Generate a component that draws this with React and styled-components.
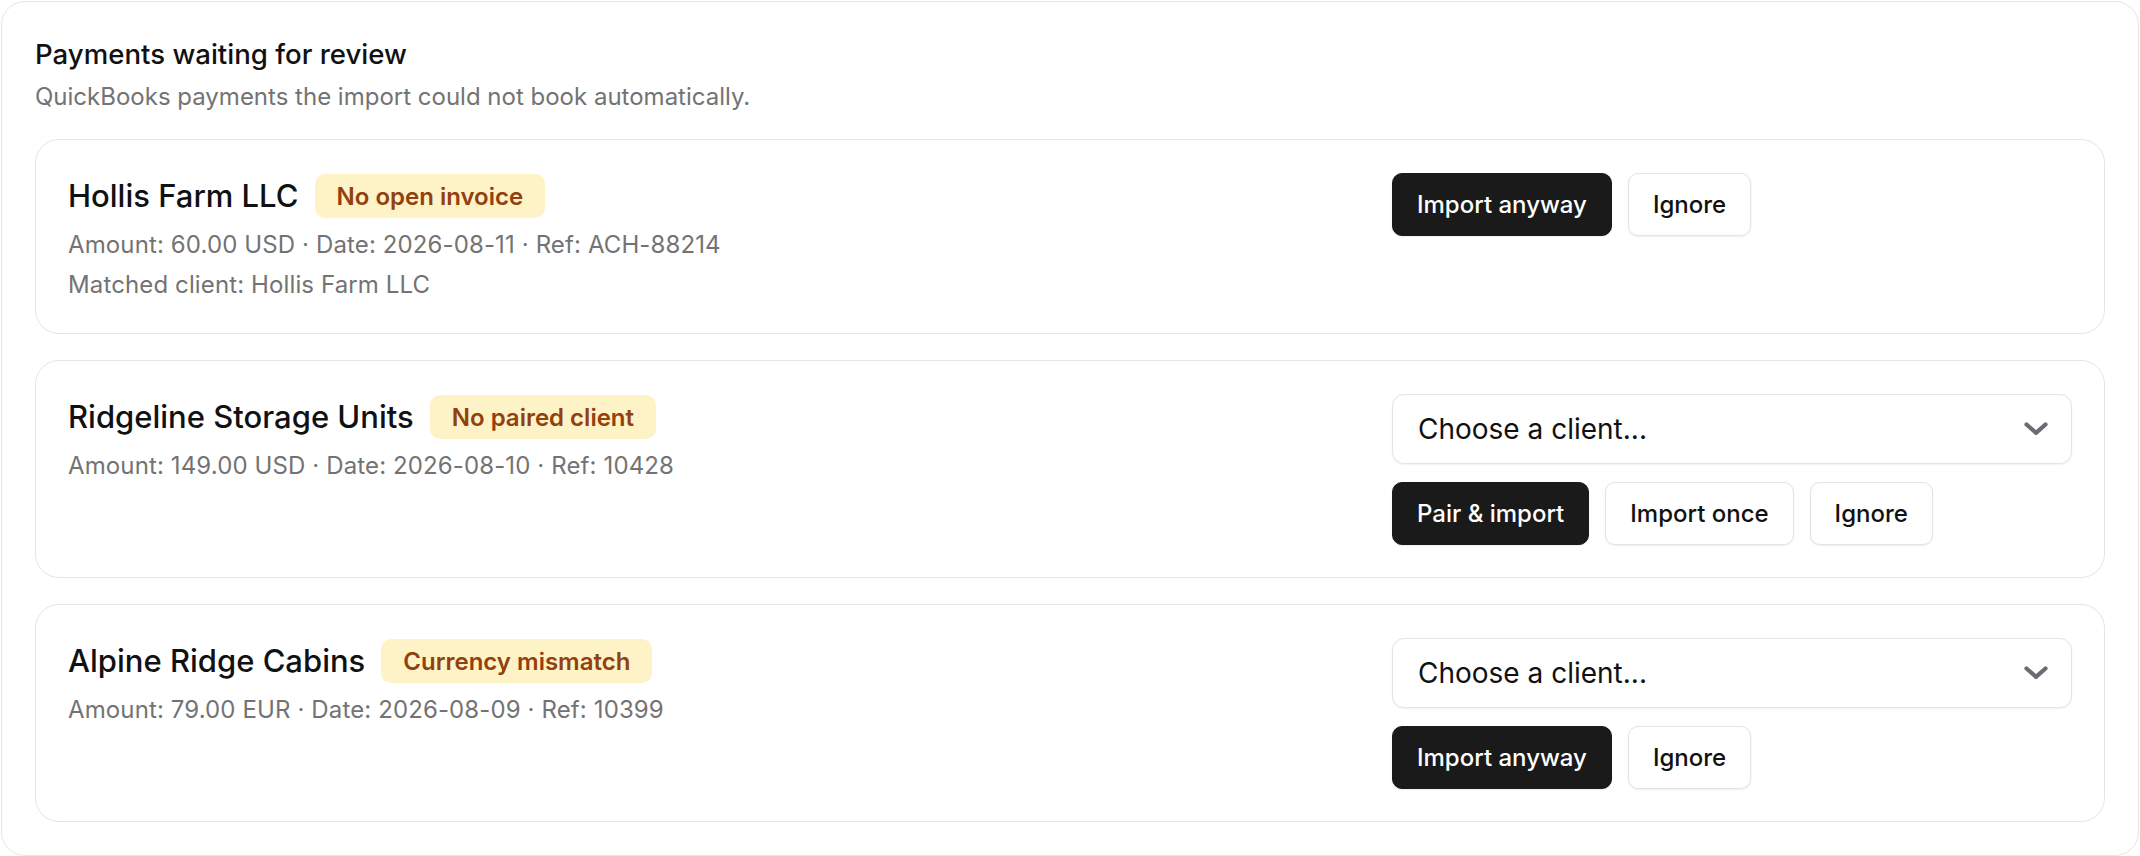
import React from 'react'
import styled, { createGlobalStyle } from 'styled-components'

const GlobalStyle = createGlobalStyle`
  html, body {
    margin: 0;
    background: #ffffff;
  }
  body {
    font-family: Inter, "Noto Sans", "Liberation Sans", sans-serif;
    color: #111111;
    -webkit-font-smoothing: antialiased;
  }
  * {
    box-sizing: border-box;
  }
`;

const Panel = styled.section`
  margin: 1px;
  padding: 33px;
  border: 1px solid #e5e5e5;
  border-radius: 24px;
  background: #ffffff;
`;

const Title = styled.h2`
  margin: 0;
  font-size: 27.6px;
  line-height: 38px;
  font-weight: 500;
  color: #111111;
`;

const Subtitle = styled.p`
  margin: 8px 0 0;
  font-size: 24px;
  line-height: 32px;
  color: #737373;
`;

const List = styled.div`
  margin-top: 26px;
  display: flex;
  flex-direction: column;
  gap: 26px;
`;

const Card = styled.article`
  display: flex;
  align-items: flex-start;
  gap: 32px;
  padding: 33px 32px 32px;
  border: 1px solid #e5e5e5;
  border-radius: 24px;
`;

const Info = styled.div`
  flex: 1;
  min-width: 0;
`;

const NameRow = styled.div`
  display: flex;
  align-items: center;
  gap: 16px;
  height: 46px;
`;

const Name = styled.h3`
  margin: 0;
  font-size: 31px;
  line-height: 46px;
  font-weight: 500;
  color: #111111;
`;

const Badge = styled.span`
  display: inline-flex;
  align-items: center;
  height: 44px;
  padding: 0 22px;
  border-radius: 10px;
  background: #fef3c7;
  color: #92400e;
  font-size: 24px;
  font-weight: 600;
`;

const Meta = styled.div`
  margin-top: ${p => (p.$first ? '10px' : '8px')};
  font-size: 24px;
  line-height: 32px;
  letter-spacing: 0.12px;
  color: #737373;
`;

const Actions = styled.div`
  width: 680px;
  flex-shrink: 0;
  display: flex;
  flex-direction: column;
  gap: 18px;
`;

const Picker = styled.button`
  appearance: none;
  display: flex;
  align-items: center;
  justify-content: space-between;
  width: 100%;
  height: 70px;
  padding: 0 23px 0 25px;
  border: 1px solid #e4e4e7;
  border-radius: 12px;
  background: #ffffff;
  box-shadow: 0 1px 2px rgba(0, 0, 0, 0.06);
  font-family: inherit;
  font-size: 28px;
  color: #111111;
  cursor: pointer;
`;

const ButtonRow = styled.div`
  display: flex;
  gap: 16px;
`;

const Button = styled.button`
  appearance: none;
  height: 63px;
  padding: 0 24px;
  border-radius: 10px;
  border: 1px solid ${p => (p.$primary ? '#1a1a1b' : '#e4e4e7')};
  background: ${p => (p.$primary ? '#1a1a1b' : '#ffffff')};
  color: ${p => (p.$primary ? '#ffffff' : '#111111')};
  box-shadow: 0 1px 2px rgba(0, 0, 0, 0.07);
  font-family: inherit;
  font-size: 24px;
  font-weight: 500;
  cursor: pointer;
`;

const Chevron = () => (
  <svg width="24" height="14" viewBox="0 0 24 14" fill="none">
    <path
      d="M2.5 2.5 L12 10.8 L21.5 2.5"
      stroke="#6b6b76"
      strokeWidth="4.2"
      strokeLinecap="round"
      strokeLinejoin="round"
    />
  </svg>
)

const payments = [
  {
    name: 'Hollis Farm LLC',
    badge: 'No open invoice',
    meta: [
      'Amount: 60.00 USD · Date: 2026-08-11 · Ref: ACH-88214',
      'Matched client: Hollis Farm LLC',
    ],
    picker: false,
    actions: [{ label: 'Import anyway', primary: true }, { label: 'Ignore' }],
  },
  {
    name: 'Ridgeline Storage Units',
    badge: 'No paired client',
    meta: ['Amount: 149.00 USD · Date: 2026-08-10 · Ref: 10428'],
    picker: true,
    actions: [
      { label: 'Pair & import', primary: true },
      { label: 'Import once' },
      { label: 'Ignore' },
    ],
  },
  {
    name: 'Alpine Ridge Cabins',
    badge: 'Currency mismatch',
    meta: ['Amount: 79.00 EUR · Date: 2026-08-09 · Ref: 10399'],
    picker: true,
    actions: [{ label: 'Import anyway', primary: true }, { label: 'Ignore' }],
  },
]

const App = () => {
  return (
    <>
      <GlobalStyle />
      <Panel>
        <Title>Payments waiting for review</Title>
        <Subtitle>QuickBooks payments the import could not book automatically.</Subtitle>
        <List>
          {payments.map(item => (
            <Card key={item.name}>
              <Info>
                <NameRow>
                  <Name>{item.name}</Name>
                  <Badge>{item.badge}</Badge>
                </NameRow>
                {item.meta.map((line, i) => (
                  <Meta key={line} $first={i === 0}>{line}</Meta>
                ))}
              </Info>
              <Actions>
                {item.picker && (
                  <Picker type="button">
                    <span>Choose a client...</span>
                    <Chevron />
                  </Picker>
                )}
                <ButtonRow>
                  {item.actions.map(a => (
                    <Button key={a.label} type="button" $primary={a.primary}>
                      {a.label}
                    </Button>
                  ))}
                </ButtonRow>
              </Actions>
            </Card>
          ))}
        </List>
      </Panel>
    </>
  )
}

export default App
